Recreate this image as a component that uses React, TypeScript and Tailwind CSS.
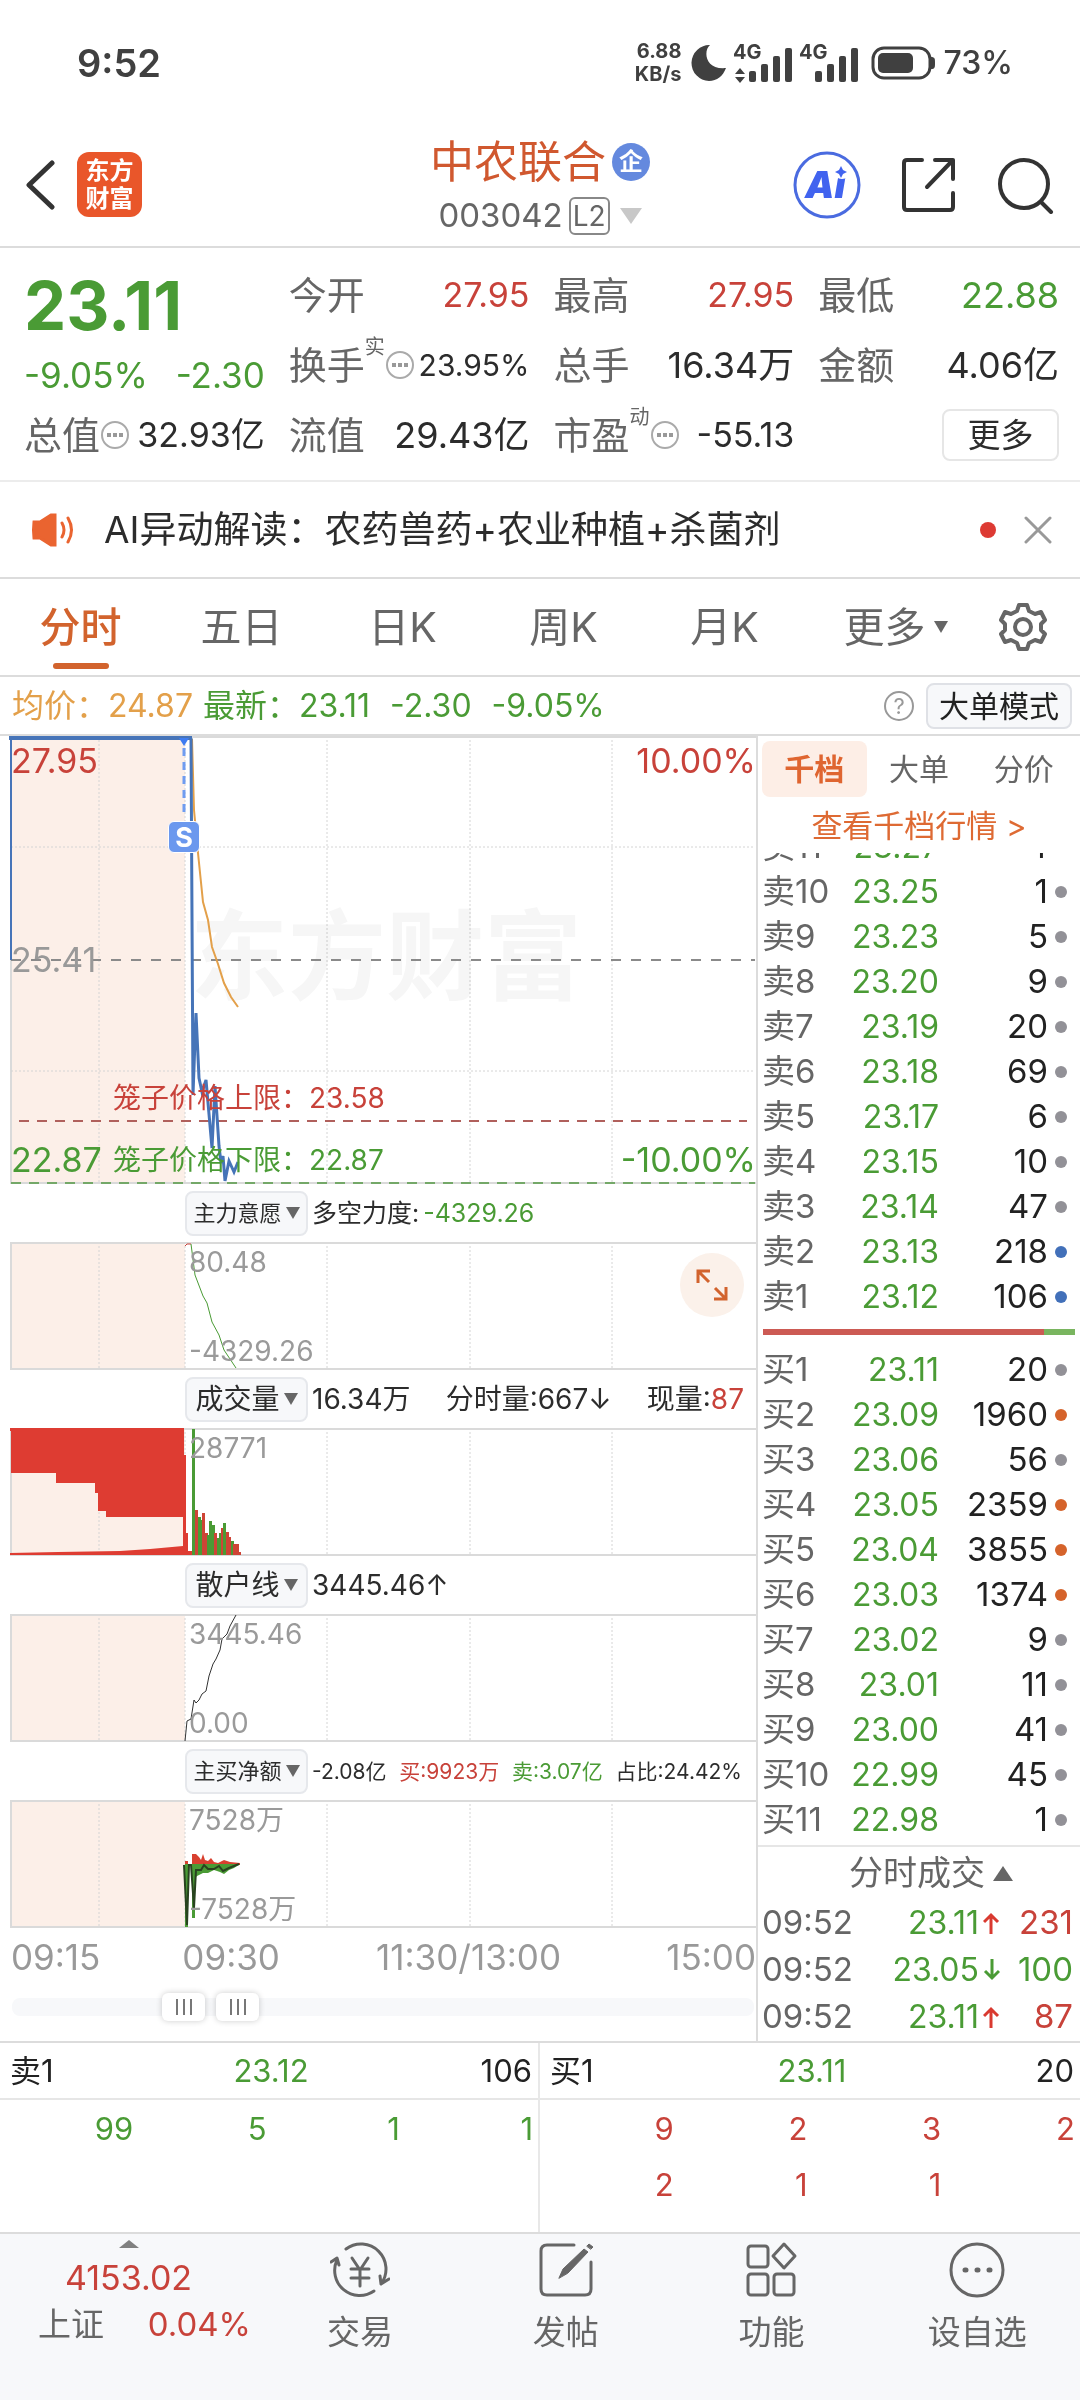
import { clsx } from "clsx";
import type { ReactNode } from "react";

const GREEN = "text-[#4a9b35]";
const RED = "text-[#c8423a]";

type Level = { side: string; price: string; volume: string; dot: string };

const GRAY_DOT = "bg-[#929197]";
const BLUE_DOT = "bg-[#4270b9]";
const ORANGE_DOT = "bg-[#d5632b]";

const asks: Level[] = [
  { side: "卖11", price: "23.27", volume: "4", dot: "bg-transparent" },
  { side: "卖10", price: "23.25", volume: "1", dot: GRAY_DOT },
  { side: "卖9", price: "23.23", volume: "5", dot: GRAY_DOT },
  { side: "卖8", price: "23.20", volume: "9", dot: GRAY_DOT },
  { side: "卖7", price: "23.19", volume: "20", dot: GRAY_DOT },
  { side: "卖6", price: "23.18", volume: "69", dot: GRAY_DOT },
  { side: "卖5", price: "23.17", volume: "6", dot: GRAY_DOT },
  { side: "卖4", price: "23.15", volume: "10", dot: GRAY_DOT },
  { side: "卖3", price: "23.14", volume: "47", dot: GRAY_DOT },
  { side: "卖2", price: "23.13", volume: "218", dot: BLUE_DOT },
  { side: "卖1", price: "23.12", volume: "106", dot: BLUE_DOT },
];

const bids: Level[] = [
  { side: "买1", price: "23.11", volume: "20", dot: GRAY_DOT },
  { side: "买2", price: "23.09", volume: "1960", dot: ORANGE_DOT },
  { side: "买3", price: "23.06", volume: "56", dot: GRAY_DOT },
  { side: "买4", price: "23.05", volume: "2359", dot: ORANGE_DOT },
  { side: "买5", price: "23.04", volume: "3855", dot: ORANGE_DOT },
  { side: "买6", price: "23.03", volume: "1374", dot: ORANGE_DOT },
  { side: "买7", price: "23.02", volume: "9", dot: GRAY_DOT },
  { side: "买8", price: "23.01", volume: "11", dot: GRAY_DOT },
  { side: "买9", price: "23.00", volume: "41", dot: GRAY_DOT },
  { side: "买10", price: "22.99", volume: "45", dot: GRAY_DOT },
  { side: "买11", price: "22.98", volume: "1", dot: GRAY_DOT },
];

const trades = [
  { time: "09:52", price: "23.11", up: true, volume: "231", color: RED },
  { time: "09:52", price: "23.05", up: false, volume: "100", color: GREEN },
  { time: "09:52", price: "23.11", up: true, volume: "87", color: RED },
];

// [x, top, colour] of each minute's volume bar after the open
const volumeBars: [number, number, string][] = [
  [195, 82, "#cf4436"],
  [198, 89, "#4a9b35"],
  [200, 92, "#4a9b35"],
  [202, 85, "#cf4436"],
  [205, 105, "#cf4436"],
  [207, 107, "#4a9b35"],
  [209, 93, "#4a9b35"],
  [212, 97, "#4a9b35"],
  [214, 105, "#cf4436"],
  [217, 110, "#4a9b35"],
  [219, 105, "#4a9b35"],
  [221, 100, "#cf4436"],
  [223, 95, "#4a9b35"],
  [226, 104, "#cf4436"],
  [228, 109, "#cf4436"],
  [231, 113, "#4a9b35"],
  [233, 116, "#cf4436"],
  [236, 116, "#cf4436"],
  [238, 124, "#cf4436"],
];

function StatusBar() {
  return (
    <div className="flex h-[125px] items-center justify-between pl-[77px] pr-[67px] text-[#404040]">
      <span className="text-[38px] font-semibold leading-none">9:52</span>
      <div className="flex items-center">
        <div className="flex flex-col items-end text-[20px] font-bold leading-[23px]">
          <span>6.88</span>
          <span>KB/s</span>
        </div>
        <svg className="ml-[10px] h-9 w-9" viewBox="0 0 36 36" fill="#404040">
          <path d="M19 0C12 6 14 25 35 23C32 31 26 36 18 36A18 18 0 0 1 19 0Z" />
        </svg>
        <Signal arrows />
        <Signal />
        <svg className="ml-3 h-9 w-[64px]" viewBox="0 0 64 36">
          <rect x="2" y="3" width="57" height="30" rx="11" fill="none" stroke="#404040" strokeWidth="3" />
          <rect x="7" y="8" width="35" height="20" rx="5" fill="#404040" />
          <path d="M60 12C64 12 64 14 64 18S64 24 60 24Z" fill="#404040" />
        </svg>
        <span className="ml-2 text-[32px] font-medium leading-none">73%</span>
      </div>
    </div>
  );
}

function Signal({ arrows }: { arrows?: boolean }) {
  return (
    <svg className="ml-[6px] h-12 w-[60px]" viewBox="0 -4 60 48" fill="#404040">
      <text x="0" y="16" fontSize="20" fontWeight="700">
        4G
      </text>
      {arrows && <path d="M7 25L12 31H2ZM7 40L12 34H2Z" />}
      <rect x="16" y="28" width="7" height="11" rx="2" />
      <rect x="28" y="21" width="7" height="18" rx="2" />
      <rect x="40" y="13" width="7" height="26" rx="2" />
      <rect x="52" y="5" width="7" height="34" rx="2" />
    </svg>
  );
}

function Header() {
  return (
    <header className="grid h-[123px] grid-cols-[1fr_auto_1fr] items-center border-b-2 border-[#dcdcdc] px-[26px] pb-[2px]">
      <div className="flex items-center gap-5">
        <button aria-label="返回">
          <svg className="h-[52px] w-[31px]" viewBox="0 0 31 52" fill="none" stroke="#333" strokeWidth="5" strokeLinecap="round" strokeLinejoin="round">
            <path d="M26 4L3 26L26 48" />
          </svg>
        </button>
        <div className="flex size-[65px] flex-col items-center justify-center rounded-[12px] bg-[#e9562a] text-[24px] font-bold leading-[28px] text-white">
          <span>东方</span>
          <span>财富</span>
        </div>
      </div>
      <div className="flex flex-col items-center gap-2">
        <div className="flex items-center gap-[6px]">
          <h1 className="text-[44px] leading-[54px] text-[#d0582f]">中农联合</h1>
          <span className="flex size-[38px] items-center justify-center rounded-full bg-[#6489de] text-[24px] font-bold leading-none text-white">
            企
          </span>
        </div>
        <button className="flex items-center text-[33px] leading-none text-[#666]">
          003042
          <span className="ml-[6px] flex h-[38px] items-center rounded-[6px] border-2 border-[#888] px-[2px] text-[28px]">L2</span>
          <svg className="ml-[10px] h-4 w-[22px]" viewBox="0 0 22 16" fill="#c8c8c8">
            <path d="M0 0H22L11 16Z" />
          </svg>
        </button>
      </div>
      <div className="flex items-center justify-end gap-[38px]">
        <button aria-label="AI">
          <svg className="size-[70px]" viewBox="0 0 70 70">
            <circle cx="35" cy="35" r="32" fill="none" stroke="#4a6be0" strokeWidth="3" />
            <text x="13" y="48" fontSize="37" fontWeight="900" fontStyle="italic" fill="#4163ef">
              Ai
            </text>
            <circle cx="50" cy="21" r="8" fill="#fff" />
            <path d="M49 16L51 20L55 22L51 24L49 28L47 24L43 22L47 20Z" fill="#4163ef" />
          </svg>
        </button>
        <button aria-label="分享">
          <svg className="size-[58px]" viewBox="0 0 58 58" fill="none" stroke="#333" strokeWidth="4" strokeLinecap="round" strokeLinejoin="round">
            <path d="M22 4H7Q4 4 4 7V51Q4 54 7 54H50Q53 54 53 51V37M35 4H53V23M53 4L27 31" />
          </svg>
        </button>
        <button aria-label="搜索">
          <svg className="size-[58px]" viewBox="0 0 58 58" fill="none" stroke="#333" strokeWidth="4" strokeLinecap="round">
            <circle cx="28" cy="28" r="24" />
            <path d="M45 46L55 56" />
          </svg>
        </button>
      </div>
    </header>
  );
}

function InfoDots() {
  return (
    <svg className="size-[30px] shrink-0" viewBox="0 0 30 30">
      <circle cx="15" cy="15" r="13" fill="none" stroke="#aaa" strokeWidth="2" />
      <path d="M7 13h4v4h-4zM13 13h4v4h-4zM19 13h4v4h-4z" fill="#999" />
    </svg>
  );
}

const quoteSizes = {
  sm: "text-[30px]",
  md: "text-[34px]",
  lg: "text-[36px]",
};

function Quote({ label, sup, info, size = "lg", color, children }: { label: string; sup?: string; info?: boolean; size?: keyof typeof quoteSizes; color?: string; children: ReactNode }) {
  return (
    <div className="flex h-[70px] items-center justify-between leading-none">
      <dt className="flex items-center text-[38px] text-[#666]">
        {label}
        {sup && <span className="self-start pb-9 text-[20px] leading-none">{sup}</span>}
        {info && <InfoDots />}
      </dt>
      <dd className={clsx("whitespace-nowrap", quoteSizes[size], color ?? "text-[#2c2c2c]")}>{children}</dd>
    </div>
  );
}

function Quotes() {
  return (
    <section className="border-b-2 border-[#ececec] pb-[10px] pl-6 pr-[21px] pt-3">
      <div className="grid grid-cols-4 gap-x-6">
        <div className={clsx("row-span-2 flex flex-col", GREEN)}>
          <strong className="flex h-[90px] items-center text-[67px] font-bold leading-none">23.11</strong>
          <div className="flex h-[50px] items-center justify-between text-[35px] leading-none">
            <span>-9.05%</span>
            <span>-2.30</span>
          </div>
        </div>
        <dl className="contents">
          <Quote label="今开" size="md" color={RED}>27.95</Quote>
          <Quote label="最高" size="md" color={RED}>27.95</Quote>
          <Quote label="最低" color={GREEN}>22.88</Quote>
          <Quote label="换手" sup="实" info size="sm">23.95%</Quote>
          <Quote label="总手">16.34万</Quote>
          <Quote label="金额">4.06亿</Quote>
          <Quote label="总值" info size="md">32.93亿</Quote>
          <Quote label="流值">29.43亿</Quote>
          <Quote label="市盈" sup="动" info size="md">-55.13</Quote>
        </dl>
        <div className="flex h-[70px] items-center justify-end">
          <button className="h-[52px] w-[117px] rounded-[8px] border-2 border-[#e6e6e6] text-[33px] leading-none text-[#2c2c2c]">更多</button>
        </div>
      </div>
    </section>
  );
}

function NewsBar() {
  return (
    <div className="flex h-[97px] items-center border-b-2 border-[#dcdcdc] pl-[31px] pr-[28px]">
      <svg className="h-9 w-[43px]" viewBox="0 0 43 36" fill="none" stroke="#ea6430" strokeWidth="3" strokeLinecap="round">
        <path d="M3 10H9L20 3H24V33H20L9 26H3Q2 18 3 10Z" fill="#ea6430" />
        <path d="M31 11Q35 18 31 25M37 6Q44 18 37 30" />
      </svg>
      <a href="#news" className="ml-[30px] text-[37px] leading-none text-[#2c2c2c]">
        AI异动解读：农药兽药+农业种植+杀菌剂
      </a>
      <span className="ml-auto size-4 rounded-full bg-[#dd3a33]" />
      <button aria-label="关闭" className="ml-[28px]">
        <svg className="size-7" viewBox="0 0 28 28" stroke="#999" strokeWidth="3" strokeLinecap="round">
          <path d="M2 2L26 26M26 2L2 26" />
        </svg>
      </button>
    </div>
  );
}

function PeriodTabs() {
  const tabs = ["分时", "五日", "日K", "周K", "月K"];
  return (
    <nav className="grid h-[98px] grid-cols-[repeat(6,1fr)_114px] border-b-2 border-[#dcdcdc] text-[41px] leading-none text-[#666]">
      {tabs.map((tab, i) => (
        <button key={tab} className={clsx("relative", i === 0 && "font-medium text-[#d2632d]")}>
          {tab}
          {i === 0 && <span className="absolute bottom-[6px] left-1/2 h-[6px] w-14 -translate-x-1/2 rounded-full bg-[#d2632d]" />}
        </button>
      ))}
      <button className="flex items-center justify-center gap-[8px] pl-5">
        更多
        <svg className="h-3 w-[14px]" viewBox="0 0 14 12" fill="#666">
          <path d="M0 0H14L7 12Z" />
        </svg>
      </button>
      <button aria-label="设置" className="flex items-center justify-center">
        <svg className="size-[50px]" viewBox="0 0 50 50" fill="none" stroke="#666" strokeWidth="4" strokeLinejoin="round">
          <path d="M21 3H29L31 9L37 12L43 10L47 18L43 22V28L47 32L43 40L37 38L31 41L29 47H21L19 41L13 38L7 40L3 32L7 28V22L3 18L7 10L13 12L19 9Z" />
          <circle cx="25" cy="25" r="8" />
        </svg>
      </button>
    </nav>
  );
}

function PriceBar() {
  return (
    <div className="flex h-[59px] items-center border-b-2 border-[#dcdcdc] pl-3 pr-2 text-[32px] leading-none">
      <span className="text-[#e3a04a]">均价：24.87</span>
      <span className={clsx("ml-[10px] flex gap-5", GREEN)}>
        <span>最新：23.11</span>
        <span>-2.30</span>
        <span>-9.05%</span>
      </span>
      <button aria-label="帮助" className="ml-auto flex size-[30px] items-center justify-center rounded-full border-2 border-[#999] text-[22px] leading-none text-[#999]">
        ?
      </button>
      <button className="ml-3 h-[46px] w-[146px] rounded-[8px] border-2 border-[#dfe1e6] bg-[#f7f8fa] text-[30px] leading-none text-[#222]">大单模式</button>
    </div>
  );
}

// Shaded pre-open zone, frame and the vertical time lines shared by every pane
function PaneGrid({ height }: { height: number }) {
  return (
    <>
      <rect x="11" y="0" width="174" height={height} fill="#fcefe8" />
      <path d={`M99 0V${height}M185 0V${height}M327 0V${height}M470 0V${height}M612 0V${height}`} stroke="#d4d4d4" strokeDasharray="2 2" />
      <path d={`M756 1H11V${height - 1}H756`} fill="none" stroke="#dadada" strokeWidth="2" />
    </>
  );
}

function Pane({ top, bottom, children, extra }: { top: string; bottom?: string; children: ReactNode; extra?: ReactNode }) {
  return (
    <div className="relative h-32 text-[28px] leading-none text-[#9a9a9a]">
      <svg className="block h-full w-full" viewBox="0 0 756 128" preserveAspectRatio="none">
        <PaneGrid height={128} />
        {children}
      </svg>
      <span className="absolute left-[25%] top-[6px]">{top}</span>
      {bottom && <span className="absolute bottom-[5px] left-[25%]">{bottom}</span>}
      {extra}
    </div>
  );
}

function PaneHeader({ name, small, children }: { name: string; small?: boolean; children: ReactNode }) {
  return (
    <div className="flex h-[58px] items-center whitespace-nowrap pl-[185px] leading-none text-[#2c2c2c]">
      <button
        className={clsx(
          "flex h-[45px] w-[123px] items-center justify-center gap-1 rounded-[8px] border-2 border-[#e6e8ec] bg-[#f7f8fa]",
          small ? "text-[22px]" : "text-[28px]",
        )}
      >
        {name}
        <svg className="h-3 w-[14px]" viewBox="0 0 14 12" fill="#666">
          <path d="M0 0H14L7 12Z" />
        </svg>
      </button>
      {children}
    </div>
  );
}

function MainChart() {
  return (
    <div className="relative h-[448px] text-[34px] leading-none">
      <div className="absolute left-[190px] top-[172px] text-[98px] font-bold leading-none text-[#f6f6f6]">东方财富</div>
      <svg className="relative block h-full w-full" viewBox="0 0 756 448" preserveAspectRatio="none" fill="none">
        <g className="mix-blend-multiply">
          <PaneGrid height={448} />
        </g>
        <path d="M11 111H755M11 335H755" stroke="#d4d4d4" strokeDasharray="2 2" />
        <path d="M11 224H755" stroke="#8a8a8a" strokeWidth="2" strokeDasharray="10 10" />
        <path d="M19 385H747" stroke="#b0605c" strokeWidth="2" strokeDasharray="10 8" />
        <path d="M11 447H755" stroke="#74a868" strokeWidth="2" strokeDasharray="10 8" />
        <path d="M192 3L194 74L198 117L203 166L208 184L212 211L218 228L224 247L231 261L238 271" stroke="#e3a04a" strokeWidth="2" />
        <path d="M11 224V3" stroke="#4674b8" strokeWidth="2" />
        <path d="M9 2H192" stroke="#4674b8" strokeWidth="4" />
        <path
          d="M191 2L193 359L196 277L199 342L202 356L206 344L212 412L215 350L219 410L221 427L223 420L225 445L229 425L234 436L238 426"
          stroke="#4674b8"
          strokeWidth="3"
        />
        <path d="M184 12V82" stroke="#6f9cf0" strokeWidth="3" strokeDasharray="8 6" />
        <path d="M179 2H189L184 10Z" fill="#3f7cf0" />
      </svg>
      <span className="absolute left-[168px] top-[85px] flex size-8 items-center justify-center rounded-[6px] border border-white bg-[#6b98ee] text-[27px] font-bold text-white">
        S
      </span>
      <span className={clsx("absolute left-[11px] top-2", RED)}>27.95</span>
      <span className="absolute left-[11px] top-[207px] text-[#999]">25.41</span>
      <span className={clsx("absolute bottom-[7px] left-[11px]", GREEN)}>22.87</span>
      <span className={clsx("absolute right-0 top-2", RED)}>10.00%</span>
      <span className={clsx("absolute bottom-[7px] right-0", GREEN)}>-10.00%</span>
      <span className={clsx("absolute left-[113px] top-[348px] text-[28px]", RED)}>笼子价格上限：23.58</span>
      <span className={clsx("absolute bottom-[10px] left-[113px] text-[28px]", GREEN)}>笼子价格下限：22.87</span>
    </div>
  );
}

function RangeThumb({ label, value }: { label: string; value: number }) {
  return (
    <input
      type="range"
      aria-label={label}
      min={0}
      max={1000}
      defaultValue={value}
      className="pointer-events-none absolute inset-0 h-7 w-full appearance-none bg-transparent [&::-webkit-slider-thumb]:pointer-events-auto [&::-webkit-slider-thumb]:h-7 [&::-webkit-slider-thumb]:w-[43px] [&::-webkit-slider-thumb]:appearance-none [&::-webkit-slider-thumb]:rounded-[6px] [&::-webkit-slider-thumb]:bg-white [&::-webkit-slider-thumb]:bg-[linear-gradient(90deg,#fff_14px,#777_14px,#777_16px,#fff_16px,#fff_21px,#777_21px,#777_23px,#fff_23px,#fff_28px,#777_28px,#777_30px,#fff_30px)] [&::-webkit-slider-thumb]:bg-[length:43px_16px] [&::-webkit-slider-thumb]:bg-center [&::-webkit-slider-thumb]:bg-no-repeat [&::-webkit-slider-thumb]:shadow-[0_0_6px_rgba(0,0,0,0.2)]"
    />
  );
}

function Charts() {
  return (
    <section className="flex flex-col">
      <MainChart />

      <PaneHeader name="主力意愿" small>
        <span className="ml-1 text-[25px]">多空力度:</span>
        <span className={clsx("ml-1 text-[25px]", GREEN)}>-4329.26</span>
      </PaneHeader>
      <Pane
        top="80.48"
        bottom="-4329.26"
        extra={
          <button aria-label="展开" className="absolute right-3 top-[11px] flex size-16 items-center justify-center rounded-full bg-[#fbf1ea]">
            <svg className="size-9" viewBox="0 0 36 36" fill="none" stroke="#d2632d" strokeWidth="3">
              <path d="M4 16V4H16M4 4L15 15M32 20V32H20M32 32L21 21" />
            </svg>
          </button>
        }
      >
        <path d="M185 4L187 2H191" fill="none" stroke="#c8423a" />
        <path d="M191 2L195 33L203 54L207 61L212 80L219 93L224 108L236 126" fill="none" stroke="#4a9b35" />
      </Pane>

      <PaneHeader name="成交量">
        <span className="flex flex-1 justify-between pl-1 pr-3 text-[28px]">
          <span>16.34万</span>
          <span>分时量:667↓</span>
          <span>
            现量:<span className={RED}>87</span>
          </span>
        </span>
      </PaneHeader>
      <Pane top="28771">
        <path d="M10 0H184V27H186V105H188V123H192V127H10V125L58 124L120 123L150 121L183 118V89H106V83H98V65H95V55H56V45H11V3H10Z" fill="#de3c32" />
        <rect x="192" y="1" width="3" height="126" fill="#4a9b35" />
        {volumeBars.map(([x, y, fill]) => (
          <rect key={x} x={x} y={y} width="3" height={127 - y} fill={fill} />
        ))}
      </Pane>

      <PaneHeader name="散户线">
        <span className="ml-1 text-[28px]">3445.46↑</span>
      </PaneHeader>
      <Pane top="3445.46" bottom="0.00">
        <path
          d="M185 127L187 107L191 105L194 86L196 89L199 86L202 80L206 77L209 62L213 50L216 45L220 36L222 25L227 20L230 12L236 1"
          fill="none"
          stroke="#333"
        />
      </Pane>

      <PaneHeader name="主买净额" small>
        <span className="flex flex-1 justify-between pl-1 pr-[14px] text-[21px]">
          <span>-2.08亿</span>
          <span className={RED}>买:9923万</span>
          <span className={GREEN}>卖:3.07亿</span>
          <span>占比:24.42%</span>
        </span>
      </PaneHeader>
      <Pane top="7528万" bottom="-7528万">
        <path d="M192 64V54H196L199 57L201 60L203 54L205 60L208 61L211 58L214 62L218 63L224 60L230 62L240 63V65H192ZM185 64V61H188V64Z" fill="#d8402f" />
        <path d="M185 64H188V127H185ZM192 64H240L234 68L229 70L224 74L220 72L214 70L208 73L203 73L197 76L195 78V118H192Z" fill="#4a9b35" />
        <path d="M184 65L187 125L189 65H191L194 108L196 70H201L204 65L208 69L214 69L219 66L223 71L229 68L239 64" fill="none" stroke="#28431f" strokeWidth="2" />
      </Pane>

      <div className="flex h-[58px] items-center pl-[11px] text-[35px] leading-none text-[#999]">
        <span className="w-[23%]">09:15</span>
        <span className="w-[26%]">09:30</span>
        <span>11:30/13:00</span>
        <span className="ml-auto">15:00</span>
      </div>
      <div className="relative mb-5 ml-3 mr-[2px] mt-[7px] h-7">
        <div className="absolute inset-x-0 top-[5px] h-[18px] rounded-[8px] bg-[#f7f8fa]" />
        <RangeThumb label="开始时间" value={215} />
        <RangeThumb label="结束时间" value={292} />
      </div>
    </section>
  );
}

function LevelTable({ levels, label }: { levels: Level[]; label: string }) {
  return (
    <table aria-label={label} className="w-full table-fixed text-[33px] leading-none">
      <tbody>
        {levels.map((level) => (
          <tr key={level.side} className="h-[45px]">
            <th scope="row" className="w-[80px] p-0 pl-1 text-left font-normal text-[#666]">{level.side}</th>
            <td className={clsx("w-[101px] p-0 text-right text-[32px]", GREEN)}>{level.price}</td>
            <td className="p-0 text-right text-[#222]">{level.volume}</td>
            <td className="w-8 p-0 pl-[7px]">
              <span className={clsx("block size-3 rounded-full", level.dot)} />
            </td>
          </tr>
        ))}
      </tbody>
    </table>
  );
}

function TradeArrow({ up }: { up: boolean }) {
  return (
    <svg
      className={clsx("ml-1 inline-block h-[22px] w-[17px] align-baseline", up ? "text-[#d93a30]" : "rotate-180 text-[#4a9b35]")}
      viewBox="0 0 17 22"
      fill="none"
      stroke="currentColor"
      strokeWidth="3"
    >
      <path d="M8 22V3M1 10L8 3L15 10" />
    </svg>
  );
}

function OrderBook() {
  return (
    <aside className="flex flex-col border-l-2 border-[#dcdcdc]">
      <div className="flex px-1 pt-[5px] text-[30px] leading-none text-[#666]">
        <button className="h-14 flex-1 rounded-[8px] bg-[#fdeee6] font-bold text-[#df6530]">千档</button>
        <button className="h-14 flex-1">大单</button>
        <button className="h-14 flex-1">分价</button>
      </div>
      <a href="#depth" className="flex h-[56px] items-center justify-center text-[31px] leading-none text-[#de6a33]">
        查看千档行情 &gt;
      </a>
      <div className="flex h-[466px] flex-col justify-end overflow-hidden">
        <LevelTable levels={asks} label="卖盘" />
      </div>
      <div className="mx-[5px] mb-3 mt-[10px] flex h-[6px] bg-[#79b55f]">
        <div className="w-9/10 bg-[#cc5a54]" />
      </div>
      <LevelTable levels={bids} label="买盘" />
      <button className="mt-[3px] flex h-[54px] items-center justify-center gap-2 border-t-2 border-[#e6e6e6] pl-6 text-[34px] leading-none text-[#666]">
        分时成交
        <svg className="h-[15px] w-5" viewBox="0 0 20 15" fill="#666">
          <path d="M0 15H20L10 0Z" />
        </svg>
      </button>
      <table aria-label="分时成交" className="w-full text-[33px] leading-none">
        <tbody>
          {trades.map((trade, i) => (
            <tr key={i} className="h-[47px]">
              <td className="p-0 pl-1 text-[#666]">{trade.time}</td>
              <td className={clsx("p-0 text-right text-[32px]", GREEN)}>
                {trade.price}
                <TradeArrow up={trade.up} />
              </td>
              <td className={clsx("w-[80px] p-0 pr-[7px] text-right", trade.color)}>{trade.volume}</td>
            </tr>
          ))}
        </tbody>
      </table>
    </aside>
  );
}

function Queue({ side, price, volume, orders, color }: { side: string; price: string; volume: string; orders: string[]; color: string }) {
  return (
    <div className="text-[31px] leading-none">
      <div className="grid h-[57px] grid-cols-3 items-center border-b-2 border-[#e6e6e6] pl-[10px] pr-[6px] text-[#222]">
        <span>{side}</span>
        <span className={clsx("text-center", GREEN)}>{price}</span>
        <span className="text-right">{volume}</span>
      </div>
      <div className={clsx("grid grid-cols-4 pr-[5px] text-right", color)}>
        {orders.map((order, i) => (
          <span key={i} className="flex h-14 items-center justify-end">
            {order}
          </span>
        ))}
      </div>
    </div>
  );
}

function NavItem({ label, children }: { label: string; children: ReactNode }) {
  return (
    <button className="flex flex-1 flex-col items-center gap-4">
      <svg className="size-[60px]" viewBox="0 0 60 60" fill="none" stroke="#666" strokeWidth="3" strokeLinecap="round" strokeLinejoin="round">
        {children}
      </svg>
      <span>{label}</span>
    </button>
  );
}

function BottomNav() {
  return (
    <nav className="flex flex-1 items-start border-t-2 border-[#dcdcdc] bg-[#f7f8fa] pb-[50px] pt-[6px] text-[33px] leading-none text-[#666]">
      <button className="flex w-[257px] flex-col items-center">
        <svg className="h-2 w-5" viewBox="0 0 20 8" fill="#808080">
          <path d="M0 8H20L10 0Z" />
        </svg>
        <span className={clsx("mt-[13px] text-[34px]", RED)}>4153.02</span>
        <span className="mt-[13px] flex w-full items-center justify-between pl-[38px] pr-[6px]">
          上证 <span className={RED}>0.04%</span>
        </span>
      </button>
      <NavItem label="交易">
        <path d="M16 9A25 25 0 0 1 51 44M44 51A25 25 0 0 1 7 20M1 22L7 18L9 25M59 39L51 44L50 36" />
        <path d="M22 18L30 30L38 18M30 30V46M21 29H39M21 38H39" />
      </NavItem>
      <NavItem label="发帖">
        <path d="M38 5H11Q5 5 5 11V49Q5 55 11 55H49Q55 55 55 49V22" />
        <path d="M23 38L27 29L48 9L52 12L32 33ZM51 6L53 4L57 7L55 9Z" fill="#666" strokeWidth="1" />
      </NavItem>
      <NavItem label="功能">
        <rect x="7" y="6" width="20" height="21" rx="3" />
        <path d="M43 4L54 16L43 28L32 16Z" />
        <rect x="7" y="34" width="20" height="21" rx="3" />
        <rect x="33" y="34" width="20" height="21" rx="3" />
      </NavItem>
      <NavItem label="设自选">
        <circle cx="30" cy="30" r="26" />
        <path d="M18 30h1M30 30h1M42 30h1" strokeWidth="5" />
      </NavItem>
    </nav>
  );
}

export default function App() {
  return (
    <div className="flex min-h-screen flex-col bg-white font-['Inter','Noto_Sans_CJK_SC',sans-serif]">
      <StatusBar />
      <Header />
      <Quotes />
      <NewsBar />
      <PeriodTabs />
      <PriceBar />
      <main className="grid grid-cols-[7fr_3fr]">
        <Charts />
        <OrderBook />
      </main>
      <section className="grid min-h-[191px] grid-cols-2 divide-x-2 divide-[#e8e8e8] border-t-2 border-[#dcdcdc]">
        <Queue side="卖1" price="23.12" volume="106" orders={["99", "5", "1", "1"]} color={GREEN} />
        <Queue side="买1" price="23.11" volume="20" orders={["9", "2", "3", "2", "2", "1", "1"]} color={RED} />
      </section>
      <BottomNav />
    </div>
  );
}
